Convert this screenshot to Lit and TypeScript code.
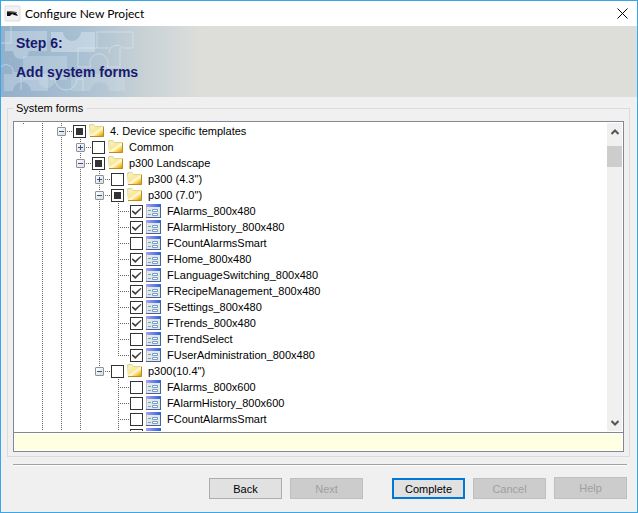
import { LitElement, html, css, svg } from "lit";
import { customElement, property, state } from "lit/decorators.js";
import { classMap } from "lit/directives/class-map.js";

type Check = "on" | "off" | "mixed";
/* Guides: one letter per indent column.
   "." empty, "s" short stub, "|" full line, "t" tee, "l" last branch,
   "+" / "-" expander on a continuing line, "=" expander on the last branch */
interface Item {
  guides: string;
  check: Check;
  folder: boolean;
  label: string;
}

const node = (guides: string, check: Check, label: string, folder = false): Item => ({
  guides,
  check,
  folder,
  label,
});

const ITEMS: Item[] = [
  node("s|-", "mixed", "4. Device specific templates", true),
  node(".||+", "off", "Common", true),
  node(".||-", "mixed", "p300 Landscape", true),
  node(".|||+", "off", 'p300 (4.3")', true),
  node(".|||-", "mixed", 'p300 (7.0")', true),
  node(".||||t", "on", "FAlarms_800x480"),
  node(".||||t", "on", "FAlarmHistory_800x480"),
  node(".||||t", "off", "FCountAlarmsSmart"),
  node(".||||t", "on", "FHome_800x480"),
  node(".||||t", "on", "FLanguageSwitching_800x480"),
  node(".||||t", "on", "FRecipeManagement_800x480"),
  node(".||||t", "on", "FSettings_800x480"),
  node(".||||t", "on", "FTrends_800x480"),
  node(".||||t", "off", "FTrendSelect"),
  node(".||||l", "on", "FUserAdministration_800x480"),
  node(".|||=", "off", 'p300(10.4")', true),
  node(".|||.t", "off", "FAlarms_800x600"),
  node(".|||.t", "off", "FAlarmHistory_800x600"),
  node(".|||.t", "off", "FCountAlarmsSmart"),
  node(".|||.t", "off", "FHome_800x600"),
];

const folderIcon = html`<svg class="icon" width="16" height="16" viewBox="0 0 16 16" aria-hidden="true">
  <defs>
    <linearGradient id="f" x1="0" y1="0" x2="1" y2="1">
      <stop offset="0" stop-color="#f3edb8" /><stop offset=".4" stop-color="#fbe896" />
      <stop offset=".55" stop-color="#fffbe0" /><stop offset=".72" stop-color="#ffd75a" /><stop offset="1" stop-color="#d99a08" />
    </linearGradient>
  </defs>
  <path d="M0 2l1-1h4l1 2h9v11H1z" fill="#e2d58c" />
  <path d="M1 3l1-1h3l1 2h8v9H1z" fill="#f4efbe" />
  <path d="M1 13V6h4l2-2h7v9z" fill="url(#f)" />
  <path d="M14.500 4v9.500H1" fill="none" stroke="#b98c2c" />
</svg>`;

const formIcon = html`<svg class="icon" width="16" height="16" viewBox="0 0 16 16" aria-hidden="true">
  <defs>
    <linearGradient id="b" x1="0" x2="1"><stop offset="0" stop-color="#a9a4f4" /><stop offset="1" stop-color="#2a5fe0" /></linearGradient>
  </defs>
  <path d="M0 1h15v14H0z" fill="#b4bedb" />
  <path d="M1 4h13v10H1z" fill="#e6e8dc" />
  <path d="M0 1h15v3H0z" fill="url(#b)" />
  <path d="M14.500 3v12M0 14.500h15" stroke="#4a5f9c" fill="none" />
  <path d="M2 7.500h3M2 11.500h3" stroke="#6f9ed8" />
  <path d="M6.500 6.500h5v2h-5zM6.500 10.500h5v2h-5z" fill="#fff" stroke="#6f9ed8" />
</svg>`;

const piece = (d: string, o: number) => svg`<path d=${d} fill="#d9e6f0" fill-opacity=${o} />`;

@customElement("tree-row")
class TreeRow extends LitElement {
  @property({ attribute: false }) item!: Item;

  static styles = css`
    :host { display: block; }
    .row { display: flex; align-items: center; height: 16px; }
    .cell {
      width: 19px; height: 16px; flex: none;
      display: grid; place-items: center;
      --v: repeating-linear-gradient(#666 0 1px, transparent 1px 2px);
      --h: repeating-linear-gradient(90deg, #666 0 1px, transparent 1px 2px);
      background-repeat: no-repeat;
    }
    .stub { background-image: var(--v); background-size: 1px 1px; background-position: 9px 0; }
    .line { background-image: var(--v); background-size: 1px 16px; background-position: 9px 0; }
    .tee { background-image: var(--v), var(--h); background-size: 1px 16px, 10px 1px; background-position: 9px 0, 9px 8px; }
    .last { background-image: var(--v), var(--h); background-size: 1px 9px, 10px 1px; background-position: 9px 0, 9px 8px; }
    .link {
      width: 2px; height: 1px; flex: none; margin-top: 1px;
      background: linear-gradient(90deg, #666 1px, transparent 1px);
    }
    .expander {
      width: 9px; height: 9px; padding: 0; margin: 1px 0 0;
      border: 1px solid #919191; border-radius: 1px;
      background: linear-gradient(135deg, #fff, #dcdcdc);
      display: grid; place-items: center;
    }
    .expander svg { display: block; }
    .check {
      appearance: none; width: 13px; height: 13px; margin: 1px 0 0; flex: none;
      border: 1px solid #333; background: #fff; outline: 0;
      display: grid; place-items: center;
    }
    .mixed::before { content: ""; width: 7px; height: 7px; background: #333; }
    .on::before {
      content: ""; width: 10px; height: 7px; background: #444;
      clip-path: polygon(0 45%, 12% 32%, 38% 66%, 90% 0, 100% 12%, 38% 100%);
    }
    .name { display: flex; align-items: center; white-space: nowrap; }
    .icon { display: block; margin: 0 5px 0 3px; flex: none; }
    .text { line-height: 16px; }
  `;

  private cell(g: string) {
    const open = g === "-" || g === "=";
    if (open || g === "+") {
      return html`<span class=${"cell " + (g === "=" ? "last" : "tee")}>
        <button class="expander" aria-label=${open ? "Collapse" : "Expand"}>
          <svg width="7" height="7" viewBox="0 0 7 7">
            <path d=${open ? "M1 3h5v1H1z" : "M1 3h5v1H1zM3 1h1v5H3z"} fill="#2c4fa8" />
          </svg>
        </button>
      </span>`;
    }
    const kinds: Record<string, string> = { s: "stub", "|": "line", t: "tee", l: "last" };
    return html`<span class=${"cell " + (kinds[g] ?? "")}></span>`;
  }

  render() {
    const { guides, check, folder, label } = this.item;
    return html`<div class="row">
      ${[...guides].map((g) => this.cell(g))}
      <span class="link"></span>
      <input
        id="c" type="checkbox"
        class=${classMap({ check: true, on: check === "on", mixed: check === "mixed" })}
        .checked=${check === "on"} .indeterminate=${check === "mixed"}
      />
      <label class="name" for="c">${folder ? folderIcon : formIcon}<span class="text">${label}</span></label>
    </div>`;
  }
}

@customElement("app-root")
class AppRoot extends LitElement {
  @state() private items = ITEMS;

  static styles = css`
    :host {
      display: flex; flex-direction: column; box-sizing: border-box;
      height: 100vh; border: 1px solid #3aa6ea; background: #f0f0f0;
      font: 11px/16px "Liberation Sans", Arial, sans-serif; color: #000;
    }
    .title {
      display: flex; align-items: center; height: 25px; flex: none;
      padding: 0 9px 0 3px; background: #fff;
    }
    .title h1 { margin: 0 auto 0 4px; font: 12px/24px Lato, "Open Sans", sans-serif; }
    .close { border: 0; padding: 0; background: none; display: block; }
    .close svg, .title svg { display: block; }
    .banner { display: grid; height: 71px; flex: none; background: #dddeda; overflow: hidden; }
    .art, .steps { grid-area: 1 / 1; }
    .art { display: block; }
    .steps { padding: 9px 15px; color: #191970; font-weight: bold; }
    .steps p, .steps h2 { margin: 0 0 13px; font-size: 14px; line-height: 16px; }
    .group {
      flex: 1; min-height: 0; min-width: 0; display: flex; flex-direction: column;
      margin: 3px 7px 0 6px; padding: 5px 5px 4px; border: 1px solid #dcdcdc;
    }
    .group legend { padding: 0 3px; line-height: 16px; }
    .stack { display: flex; flex-direction: column; height: 100%; }
    .tree { flex: 1; min-height: 0; display: flex; border: 1px solid #828790; background: #fff; padding: 1px 1px 1px 0; }
    .rows { flex: 1; min-width: 0; overflow: hidden; }
    .scroll { width: 15px; flex: none; display: flex; flex-direction: column; background: #f0f0f0; }
    .scroll button { border: 0; padding: 0; background: none; height: 17px; display: grid; place-items: center; }
    .track { flex: 1; padding-top: 6px; }
    .thumb { height: 21px; background: #cdcdcd; }
    .note { flex: none; height: 16px; border: 1px solid #828790; border-top: 0; background: #ffffe1; padding: 1px; box-shadow: inset 0 0 0 1px #fff; }
    .footer {
      flex: none; display: flex; justify-content: flex-end; align-items: flex-end; gap: 8px;
      margin: 7px 10px 13px 12px; padding-top: 12px;
      border-top: 1px solid #a0a0a0; box-shadow: inset 0 1px #fff;
    }
    .btn {
      width: 73px; height: 21px; padding: 0; border: 1px solid #adadad; background: #e1e1e1;
      font: inherit; color: #000;
    }
    .btn:disabled { background: #ccc; border-color: #bfbfbf; color: #a0a0a0; }
    .primary { border: 2px solid #0078d7; margin-left: 21px; }
    .tall { height: 22px; }
  `;

  render() {
    return html`
      <header class="title">
        <svg width="17" height="17" viewBox="0 0 17 17" aria-hidden="true">
          <rect x="1" y="1" width="15" height="15" rx="1" fill="#f2f2f2" stroke="#ddd" />
          <path d="M3 6l9 1v1l2 3-4-1-2-1-2 2H3z" fill="#111" />
          <path d="M3 6l10 1v1L3 7z" fill="#777" />
        </svg>
        <h1>Configure New Project</h1>
        <button class="close" aria-label="Close">
          <svg width="11" height="11" viewBox="0 0 11 11"><path d="M.5.5l10 10M10.500.5l-10 10" stroke="#000" /></svg>
        </button>
      </header>
      <section class="banner">
        <svg class="art" width="200" height="71" viewBox="0 0 200 71" aria-hidden="true">
          <defs>
            <linearGradient id="g" x1="0" x2="1">
              <stop offset="0" stop-color="#93b0ca" /><stop offset=".4" stop-color="#a9c0d2" />
              <stop offset=".7" stop-color="#c7d1d5" /><stop offset="1" stop-color="#dddeda" />
            </linearGradient>
          </defs>
          <rect width="200" height="71" fill="url(#g)" />
          ${piece("M4 5H46V25H28a8 8 0 0 1-16 0H4z", 0.4)}
          ${piece("M50 6H62a9 9 0 0 0 18 0H94V26H50z", 0.5)}
          ${piece("M22 30H66V54H54a8 8 0 0 1-16 0H22z", 0.3)}
          ${piece("M3 48V65H12a9 9 0 1 1 18 0H47V48z", 0.35)}
          ${piece("M70 48V65H90a9 9 0 1 1 18 0H124V48z", 0.25)}
          <g fill="none" stroke="#e8f0f4" stroke-opacity=".5">
            <path d="M96 22V6H132V22H122a8 8 0 0 0-14 5" />
            <path d="M77 41V22H108M77 41H90a9 9 0 1 1 16 0H119V22" />
            <path d="M0 17H10V0M0 41a7 7 0 0 1 12 6H20V64" />
            <path d="M49 53H54a11 11 0 1 0 22 0H82V65" />
          </g>
        </svg>
        <div class="steps"><p>Step 6:</p><h2>Add system forms</h2></div>
      </section>
      <fieldset class="group">
        <legend>System forms</legend>
        <div class="stack">
          <div class="tree">
            <div class="rows">${this.items.map((i) => html`<tree-row .item=${i}></tree-row>`)}</div>
            <div class="scroll">
              <button aria-label="Scroll up"><svg width="8" height="6" viewBox="0 0 8 6"><path d="M.5 5L4 1.500 7.500 5" fill="none" stroke="#555" stroke-width="2" /></svg></button>
              <div class="track"><div class="thumb"></div></div>
              <button aria-label="Scroll down"><svg width="8" height="6" viewBox="0 0 8 6"><path d="M.5 1L4 4.500 7.500 1" fill="none" stroke="#555" stroke-width="2" /></svg></button>
            </div>
          </div>
          <div class="note"></div>
        </div>
      </fieldset>
      <footer class="footer">
        <button class="btn">Back</button>
        <button class="btn" disabled>Next</button>
        <button class="btn primary">Complete</button>
        <button class="btn" disabled>Cancel</button>
        <button class="btn tall" disabled>Help</button>
      </footer>
    `;
  }
}
